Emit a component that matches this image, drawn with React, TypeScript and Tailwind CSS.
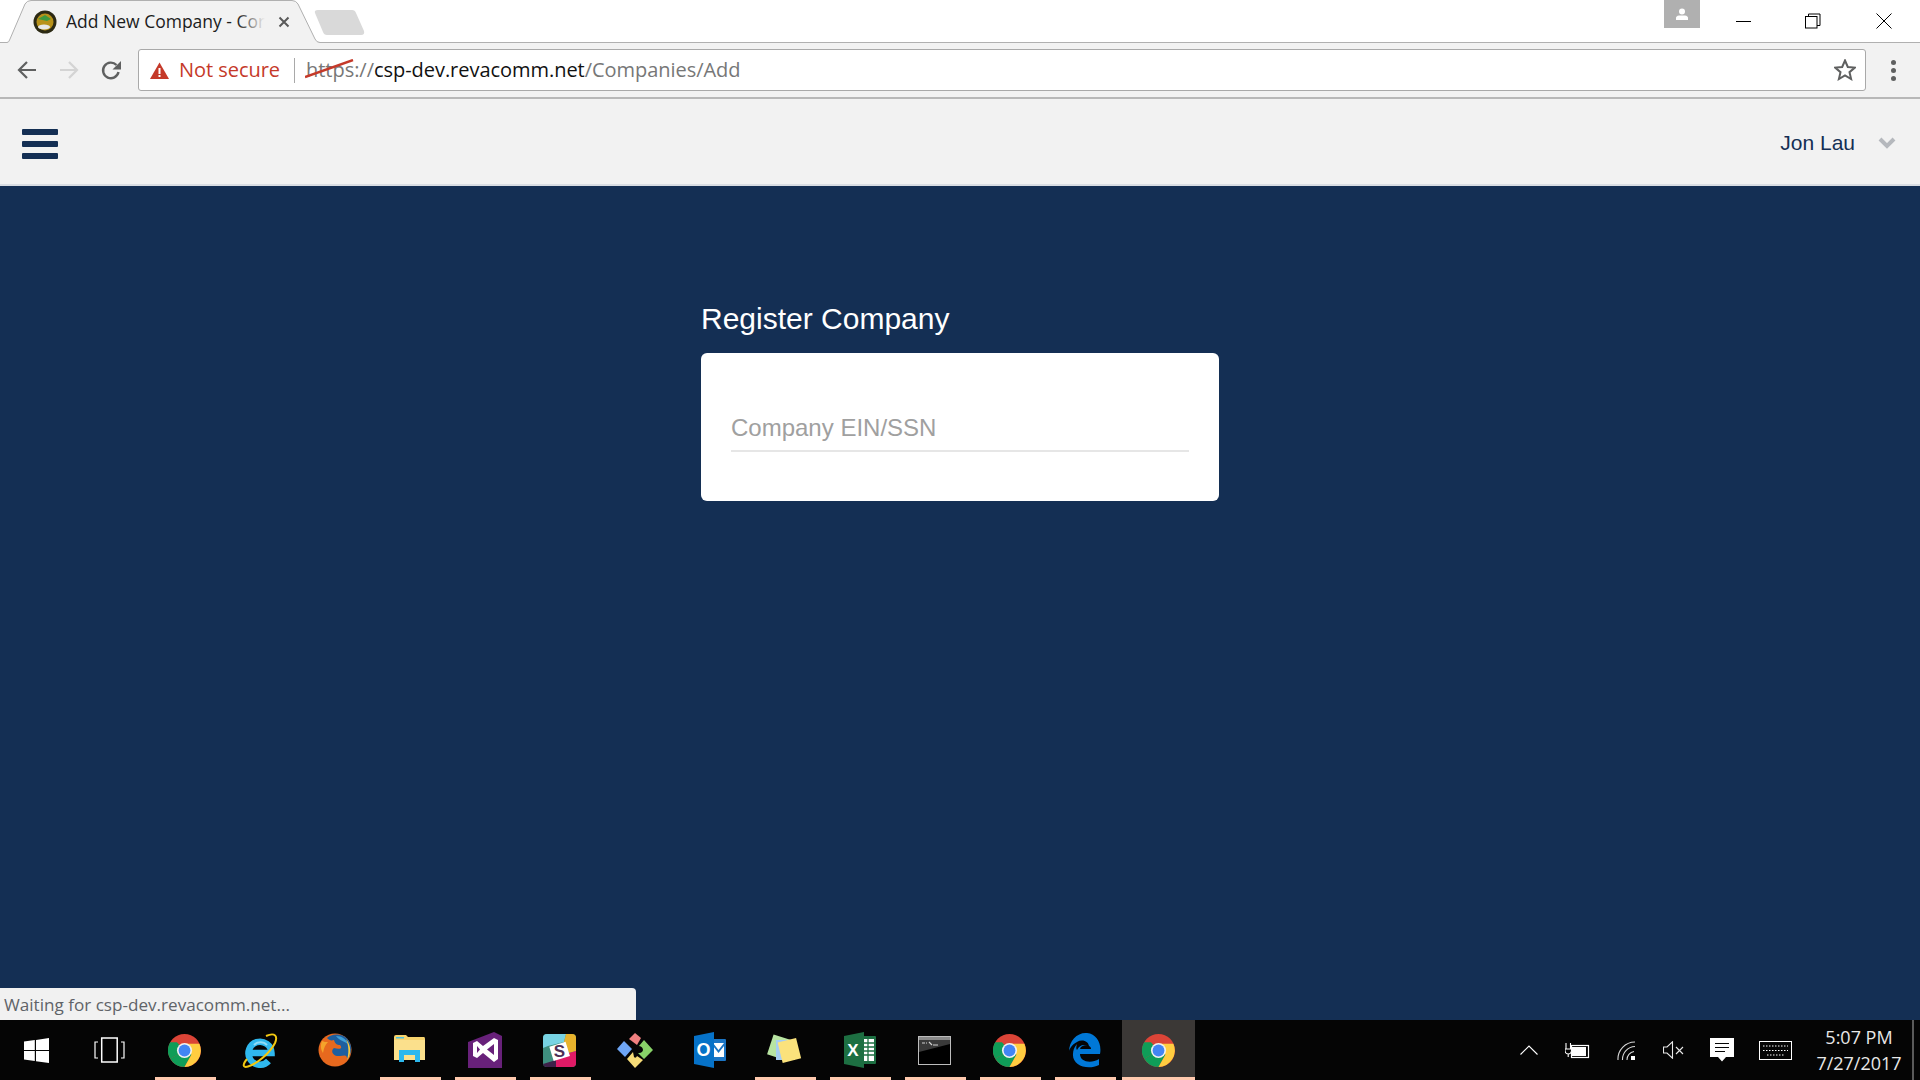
import React from "react";

const ui = "font-['Open_Sans','Noto_Sans',sans-serif]";

function ChromeLogo({ size = 33 }: { size?: number }) {
  return (
    <svg width={size} height={size} viewBox="0 0 48 48">
      <circle cx="24" cy="24" r="24" fill="#db4437" />
      <path d="M24 24 L3.2 36 A24 24 0 0 0 24 48 L36 27 Z" fill="#0f9d58" />
      <path d="M3.2 12 A24 24 0 0 0 3.2 36 L13.6 30 L24 24 L13 12 Z" fill="#0f9d58" />
      <path d="M24 14 L45.6 14 A24 24 0 0 1 24 48 L34 30 Z" fill="#ffcd40" />
      <circle cx="24" cy="24" r="11" fill="#f1f1f1" />
      <circle cx="24" cy="24" r="8.6" fill="#4285f4" />
    </svg>
  );
}

function IEIcon() {
  return (
    <svg width="36" height="36" viewBox="0 0 36 36">
      <path d="M9 21 H29.5 A11.5 11.5 0 1 0 26.5 29" fill="none" stroke="#2fb8ee" strokeWidth="6.5" />
      <path d="M12 13 A9 9 0 0 1 25 13" fill="none" stroke="#8fdcf7" strokeWidth="2" />
      <path d="M5 27 C0 33 1 36 6 34.5 C15 32 28 21 33 11 C36 4 33 0 24 4" fill="none" stroke="#f2c811" strokeWidth="2" />
    </svg>
  );
}

function FirefoxIcon() {
  return (
    <svg width="34" height="34" viewBox="0 0 34 34">
      <circle cx="17" cy="17" r="16.5" fill="#e7691e" />
      <path d="M9 5 C14 0 26 0 31 8 C35 15 33 22 29 26 C29 21 26 23 22 23 C15 24 12 18 16 15 C22 17 25 15 22 12 C19 12 17 11 16 7 C13 8 11 7 9 5 Z" fill="#1d5f9f" />
      <path d="M18 3 C24 3 28 6 30 11 C26 8 22 8 18 3 Z" fill="#3fa0d8" />
      <path d="M28 6 C33 12 34 21 29 27 C31 20 31 13 28 6 Z" fill="#f6c93c" />
      <path d="M4 8 C2 13 3 17 5 20 C6 15 7 12 10 9 C8 9 6 9 4 8 Z" fill="#f5a32a" />
    </svg>
  );
}

function ExplorerIcon() {
  return (
    <svg width="33" height="32" viewBox="0 0 33 32">
      <path d="M1 3 Q1 1 3 1 H13 L15 3 H31 Q32 3 32 5 V26 H3 Q1 26 1 24 Z" fill="#f6d36d" />
      <rect x="1" y="6" width="31" height="20" fill="#fbe08c" />
      <rect x="3" y="3" width="8" height="1.5" fill="#4cc2e0" />
      <path d="M6 28 V16 H27 V28 H22 V21 H11 V28 Z" fill="#2cb8ee" />
    </svg>
  );
}

function VSIcon() {
  return (
    <svg width="34" height="36" viewBox="0 0 34 36">
      <path d="M0 10 L26 0 L34 4 V36 H0 Z" fill="#68217a" />
      <path d="M5 11 L9 9 L15 14 L26 6 L30 8 V27 L26 30 L15 21 L9 26 L5 24 Z M9 14 V21 L12 17.5 Z M19 17.5 L26 23 V12 Z" fill="#fff" fillRule="evenodd" />
    </svg>
  );
}

function SlackIcon() {
  return (
    <svg width="33" height="33" viewBox="0 0 33 33">
      <defs>
        <clipPath id="sl"><rect width="33" height="33" rx="4" /></clipPath>
      </defs>
      <g clipPath="url(#sl)">
        <rect width="33" height="33" fill="#3f8f7f" />
        <path d="M0 0 H23 L21 8 L5 12 L0 14 Z" fill="#78d3e3" />
        <path d="M23 0 H33 V17 L26 19 L21 8 Z" fill="#e8b32c" />
        <path d="M26 19 L33 17 V33 H13 L10 27 Z" fill="#e01a66" />
        <path d="M0 30 L13 26 L13 33 H0 Z" fill="#3e2149" />
        <rect x="8" y="10" width="17" height="15" fill="#fff" transform="rotate(-17 16 17)" />
        <text x="16.5" y="23" textAnchor="middle" fontSize="17" fontWeight="700" fill="#4d2e55" fontFamily="'Liberation Sans',sans-serif">S</text>
      </g>
    </svg>
  );
}

function GitIcon() {
  return (
    <svg width="36" height="36" viewBox="0 0 36 36">
      <path d="M18 1 L24 6 L20 13 L12 7 Z" fill="#f08080" />
      <path d="M7 9 L15 17 L8 25 L0 17 Z" fill="#6ea6f5" />
      <path d="M27 8 L36 18 L27 27 L21 21 C27 22 28 15 22 14 Z" fill="#88d368" />
      <path d="M10 27 L16 20 L17 25 C18 26 19 26 20 24 L26 28 L18 36 Z" fill="#f7dc78" />
    </svg>
  );
}

function OutlookIcon() {
  return (
    <svg width="32" height="36" viewBox="0 0 32 36">
      <rect x="17" y="7" width="15" height="22" rx="1" fill="#1b75c4" />
      <path d="M19 11 H30 V25 H19 Z" fill="#fff" />
      <path d="M19 11 L24.5 18 L30 11 V14 L24.5 21 L19 14 Z" fill="#1b75c4" />
      <path d="M0 4 L20 0 V36 L0 32 Z" fill="#0672c8" />
      <text x="9.5" y="24" textAnchor="middle" fontSize="18" fontWeight="700" fill="#fff" fontFamily="'Liberation Sans',sans-serif">O</text>
    </svg>
  );
}

function NotesIcon() {
  return (
    <svg width="36" height="32" viewBox="0 0 36 32">
      <rect x="3" y="3" width="20" height="21" fill="#b8e4a2" transform="rotate(18 13 13)" />
      <rect x="9" y="6" width="19" height="20" fill="#a5cdf2" />
      <rect x="13" y="6" width="19" height="21" fill="#fbe27c" transform="rotate(-14 22 17)" />
    </svg>
  );
}

function ExcelIcon() {
  return (
    <svg width="32" height="36" viewBox="0 0 32 36">
      <rect x="16" y="4" width="16" height="28" rx="1" fill="#1d6f42" />
      <rect x="20" y="7" width="10" height="22" fill="#fff" />
      <path d="M20 11 H30 M20 15 H30 M20 19 H30 M20 23 H30 M24 7 V29" stroke="#1d6f42" strokeWidth="1.3" />
      <path d="M0 4 L20 0 V36 L0 32 Z" fill="#1d6f42" />
      <text x="9" y="24" textAnchor="middle" fontSize="17" fontWeight="700" fill="#fff" fontFamily="'Liberation Sans',sans-serif">X</text>
    </svg>
  );
}

function CmdIcon() {
  return (
    <svg width="33" height="29" viewBox="0 0 33 29">
      <rect x="0.5" y="0.5" width="32" height="28" fill="#000" stroke="#bdbdbd" />
      <rect x="1" y="1" width="31" height="3" fill="#8a8a8a" />
      <path d="M1 4 H32 V8 L1 16 Z" fill="#3a3a3a" />
      <path d="M4 7 H7 M8 7 H9 M11 6 L14 9 M15 9 H20" stroke="#cfcfcf" strokeWidth="1.2" />
    </svg>
  );
}

function EdgeIcon() {
  return (
    <svg width="32" height="36" viewBox="0 0 32 36">
      <path d="M31 22 H11 C11 30 22 32 30 27 V33 C18 39 3 33 4 22 C4 19 5 15 8 12 C7 15 7 17 8 18 C11 12 16 12 20 15 C20 9 13 7 8 10 C2 13 0 18 0 20 C0 8 9 0 18 1 C28 2 33 12 31 22 Z" fill="#0078d7" />
      <path d="M11 17 H22 C22 12 12 12 11 17 Z" fill="#050505" />
    </svg>
  );
}

function Cell({ children, mark, w = "w-[75px]", active }: { children?: React.ReactNode; mark?: boolean; w?: string; active?: boolean }) {
  return (
    <div className={`relative flex h-full shrink-0 items-center justify-center ${w} ${active ? "bg-[#3b3836]" : ""}`}>
      {children}
      {mark && <span className={`absolute bottom-0 left-[8px] right-[6px] h-[3px] bg-[#ffc9ae] ${active ? "!left-0 !right-0" : ""}`} />}
    </div>
  );
}

export default function App() {
  return (
    <div className="relative flex h-screen w-full flex-col overflow-hidden bg-[#142f54]">
      {/* tab strip */}
      <div className="relative flex h-[43px] shrink-0 border-b border-[#b0b0b0] bg-white">
        <div className={`relative z-10 flex h-[43px] w-[320px] items-start ${ui}`}>
          <svg className="absolute inset-0" width="320" height="43" viewBox="0 0 320 43">
            <path d="M0 42.5 H7 Q9 42.5 10 39 L25 4 Q27 0.5 31 0.5 H292 Q296 0.5 298 4 L315 39 Q316.5 42.5 320 42.5 V44 H0 Z" fill="#f2f2f2" stroke="#b0b0b0" />
            <rect x="0" y="43" width="320" height="2" fill="#f2f2f2" />
          </svg>
          <svg className="absolute left-[33px] top-[10px]" width="24" height="24" viewBox="0 0 24 24">
            <circle cx="12" cy="12" r="11.5" fill="#2c2a14" />
            <circle cx="12" cy="12" r="8.5" fill="#b8921a" />
            <path d="M5 9 L12 5 L18 9 L14 11 Z" fill="#3e9a3e" />
            <ellipse cx="11" cy="17" rx="6" ry="2.5" fill="#e8e8e8" />
          </svg>
          <div className="absolute left-[66px] top-[9px] w-[199px] overflow-hidden whitespace-nowrap text-[17.5px] leading-[24px] text-[#1c1c1c]">
            Add New Company - Cor
            <span className="absolute right-0 top-0 h-full w-[28px] bg-gradient-to-r from-transparent to-[#f2f2f2]" />
          </div>
          <svg className="absolute left-[278px] top-[16px]" width="12" height="12" viewBox="0 0 12 12">
            <path d="M1.5 1.5 L10.5 10.5 M10.5 1.5 L1.5 10.5" stroke="#5a5a5a" strokeWidth="2" />
          </svg>
        </div>
        <svg className="mt-[10px] -ml-[6px]" width="52" height="26" viewBox="0 0 52 26">
          <path d="M1 3 Q0 0 4 0 H38 Q41 0 42 3 L50 21 Q51 25 47 25 H13 Q10 25 9 22 Z" fill="#d9d9d9" />
        </svg>
        <div className="ml-auto flex h-[28px] items-start">
          <div className="flex h-[28px] w-[36px] items-center justify-center bg-[#b0b0b0]">
            <svg width="14" height="14" viewBox="0 0 14 14">
              <circle cx="7" cy="4.5" r="3" fill="#fff" />
              <path d="M1 13 V11 Q1 9 4 8.5 H10 Q13 9 13 11 V13 Z" fill="#fff" />
            </svg>
          </div>
          <div className="ml-[36px] flex h-[42px] items-center">
            <span className="block h-[1px] w-[15px] bg-black" />
          </div>
          <div className="ml-[54px] flex h-[42px] items-center">
            <svg width="16" height="16" viewBox="0 0 16 16" fill="none" stroke="#000">
              <rect x="0.5" y="3.5" width="11.5" height="11.5" fill="#fff" />
              <path d="M3.5 3.5 V1 H15 V12.5 H12" />
            </svg>
          </div>
          <div className="ml-[55px] mr-[28px] flex h-[42px] items-center">
            <svg width="16" height="16" viewBox="0 0 16 16" stroke="#000">
              <path d="M0.5 0.5 L15.5 15.5 M15.5 0.5 L0.5 15.5" />
            </svg>
          </div>
        </div>
      </div>

      {/* toolbar */}
      <div className="flex h-[56px] shrink-0 items-center border-b-2 border-[#b8b8b8] bg-[#f2f2f2]">
        <div className="flex w-[138px] shrink-0 items-center pl-[17px]">
          <svg width="20" height="20" viewBox="0 0 20 20" fill="none" stroke="#5f6060" strokeWidth="2.2">
            <path d="M19 10 H2 M10 2 L2 10 L10 18" />
          </svg>
          <svg className="ml-[22px]" width="20" height="20" viewBox="0 0 20 20" fill="none" stroke="#d4d4d4" strokeWidth="2.2">
            <path d="M1 10 H18 M10 2 L18 10 L10 18" />
          </svg>
          <svg className="ml-[22px]" width="21" height="21" viewBox="0 0 21 21" fill="none">
            <path d="M17.5 12 A7.8 7.8 0 1 1 15.5 5" stroke="#5f6060" strokeWidth="2.4" />
            <path d="M20 1 V9.5 H11.5 Z" fill="#5f6060" />
          </svg>
        </div>
        <div className="flex h-[42px] w-[1728px] shrink-0 items-center rounded-[3px] border border-[#a9a9a9] bg-white pl-[11px] pr-[9px] font-['Open_Sans','Noto_Sans',sans-serif] text-[20px] tracking-[-0.04px]">
          <svg width="19" height="17" viewBox="0 0 19 17">
            <path d="M9.5 0.5 L19 17 H0 Z" fill="#c53929" />
            <rect x="8.5" y="6" width="2" height="6" fill="#fff" />
            <rect x="8.5" y="13" width="2" height="2" fill="#fff" />
          </svg>
          <span className="ml-[10px] text-[#c53929]">Not secure</span>
          <span className="ml-[14px] h-[25px] w-px bg-[#a9a9a9]" />
          <span className="relative ml-[11px] whitespace-nowrap">
            <span className="relative text-[#777]">
              https
              <svg className="absolute left-[-1px] top-[3px]" width="50" height="24" viewBox="0 0 50 24">
                <path d="M0 18 L48 1" stroke="#c53929" strokeWidth="2.4" />
              </svg>
            </span>
            <span className="text-[#777]">://</span>
            <span className="text-[#111]">csp-dev.revacomm.net</span>
            <span className="text-[#777]">/Companies/Add</span>
          </span>
          <svg className="ml-auto" width="22" height="22" viewBox="0 0 22 22">
            <path d="M11 1.5 L13.8 8 L20.8 8.6 L15.5 13.2 L17.1 20 L11 16.4 L4.9 20 L6.5 13.2 L1.2 8.6 L8.2 8 Z" fill="none" stroke="#5f6060" strokeWidth="2" />
          </svg>
        </div>
        <div className="ml-[25px] flex flex-col gap-[3px]">
          <span className="h-[5px] w-[5px] rounded-full bg-[#5f6060]" />
          <span className="h-[5px] w-[5px] rounded-full bg-[#5f6060]" />
          <span className="h-[5px] w-[5px] rounded-full bg-[#5f6060]" />
        </div>
      </div>

      {/* app header */}
      <header className="flex h-[87px] shrink-0 items-center justify-between border-b-2 border-[#d9dde3] bg-[#f2f2f2] pt-[3px] pl-[22px] pr-[24px] font-['Liberation_Sans',sans-serif]">
        <div className="mt-[2px] flex w-[36px] flex-col gap-[6px]">
          <span className="h-[6px] rounded-[1px] bg-[#142f54]" />
          <span className="h-[6px] rounded-[1px] bg-[#142f54]" />
          <span className="h-[6px] rounded-[1px] bg-[#142f54]" />
        </div>
        <div className="flex items-center">
          <span className="text-[21px] text-[#142f54]">Jon Lau</span>
          <svg className="ml-[23px]" width="18" height="12" viewBox="0 0 18 12">
            <path d="M2 2 L9 9 L16 2" fill="none" stroke="#b5b8bd" strokeWidth="4" />
          </svg>
        </div>
      </header>

      {/* main */}
      <main className="flex flex-1 flex-col items-center font-['Liberation_Sans',sans-serif]">
        <div className="mt-[114px] w-[518px]">
          <h1 className="pb-[15px] text-[30px] leading-[38px] text-white">Register Company</h1>
          <div className="h-[148px] rounded-[6px] bg-white px-[30px] pt-[57px]">
            <div className="h-[42px] border-b-2 border-[#e6e6e6] text-[24px] leading-[36px] text-[#a0a0a0]">Company EIN/SSN</div>
          </div>
        </div>
      </main>

      {/* status bubble */}
      <div className={`absolute bottom-[60px] left-0 flex h-[32px] w-[636px] items-center rounded-tr-[4px] bg-[#f1f1f1] pl-[4px] pt-[1px] text-[17.1px] text-[#5f6368] ${ui}`}>
        Waiting for csp-dev.revacomm.net...
      </div>

      {/* taskbar */}
      <footer className={`flex h-[60px] shrink-0 items-stretch bg-[#050505] text-white ${ui}`}>
        <Cell w="w-[72px]">
          <svg width="25" height="25" viewBox="0 0 25 25" fill="#fff">
            <path d="M0 3.6 L10.8 2.1 V12 H0 Z M12 1.9 L25 0 V12 H12 Z M0 13 H10.8 V23 L0 21.4 Z M12 13 H25 V25 L12 23.2 Z" />
          </svg>
        </Cell>
        <Cell>
          <svg width="31" height="26" viewBox="0 0 31 26" fill="none" stroke="#fff" strokeWidth="1.5">
            <rect x="7.7" y="1" width="15.5" height="24" />
            <path d="M4 5 H1 V21 H4 M27 5 H30 V21 H27" strokeWidth="1.2" />
          </svg>
        </Cell>
        <Cell mark><ChromeLogo /></Cell>
        <Cell><IEIcon /></Cell>
        <Cell><FirefoxIcon /></Cell>
        <Cell mark><ExplorerIcon /></Cell>
        <Cell mark><VSIcon /></Cell>
        <Cell mark><SlackIcon /></Cell>
        <Cell><GitIcon /></Cell>
        <Cell><OutlookIcon /></Cell>
        <Cell mark><NotesIcon /></Cell>
        <Cell mark><ExcelIcon /></Cell>
        <Cell mark><CmdIcon /></Cell>
        <Cell mark><ChromeLogo /></Cell>
        <Cell mark><EdgeIcon /></Cell>
        <Cell mark active w="w-[73px]"><ChromeLogo /></Cell>

        <div className="ml-auto flex items-center">
          <svg width="18" height="10" viewBox="0 0 18 10" fill="none" stroke="#fff" strokeWidth="1.1">
            <path d="M0.5 9.5 L9 1 L17.5 9.5" />
          </svg>
          <svg className="ml-[27px]" width="25" height="17" viewBox="0 0 25 17" fill="none" stroke="#fff">
            <rect x="6.5" y="3.5" width="17" height="12" strokeWidth="1.2" />
            <rect x="6" y="5" width="15" height="9" fill="#fff" stroke="none" />
            <path d="M1 7 V1 M5.5 7 V1 M0 7 H6.5 V9 Q6 12 3.2 12 Q0.5 12 0 9 Z M3.2 12 V15" strokeWidth="1.1" fill="#050505" />
          </svg>
          <svg className="ml-[27px]" width="19" height="19" viewBox="0 0 19 19" fill="none" stroke="#d8d8d8" strokeWidth="1.1">
            <path d="M1 19 A17 17 0 0 1 18 1 M5.5 19 A13 13 0 0 1 18 5.5 M10 19 A8.5 8.5 0 0 1 17 10.5" />
            <rect x="14" y="15" width="4" height="4" fill="#fff" stroke="none" />
          </svg>
          <svg className="ml-[27px]" width="21" height="18" viewBox="0 0 21 18" fill="none" stroke="#e8e8e8" strokeWidth="1.1">
            <path d="M0.5 6 H4 L9.5 0.8 V17.2 L4 12 H0.5 Z M13 6 L20 13 M20 6 L13 13" />
          </svg>
          <svg className="ml-[26px]" width="24" height="24" viewBox="0 0 24 24">
            <path d="M0 0 H24 V19 H16 L12 23.5 L8 19 H0 Z" fill="#fff" />
            <path d="M5 5.5 H19 M5 9.5 H19 M5 13.5 H15" stroke="#050505" strokeWidth="1.2" />
          </svg>
          <svg className="ml-[25px]" width="33" height="19" viewBox="0 0 33 19" fill="none" stroke="#fff">
            <rect x="0.5" y="0.5" width="32" height="18" strokeWidth="1" />
            <path d="M4 5 H29 M4 9.5 H29 M8 14 H25" strokeDasharray="1.5 1.5" strokeWidth="1" />
          </svg>
          <div className="ml-[17px] flex w-[100px] flex-col items-center text-[18px] leading-[26px] text-[#e8e8e8]">
            <span>5:07 PM</span>
            <span>7/27/2017</span>
          </div>
          <div className="ml-[3px] h-full w-[8px] border-l-2 border-[#5a5a5a]" />
        </div>
      </footer>
    </div>
  );
}
